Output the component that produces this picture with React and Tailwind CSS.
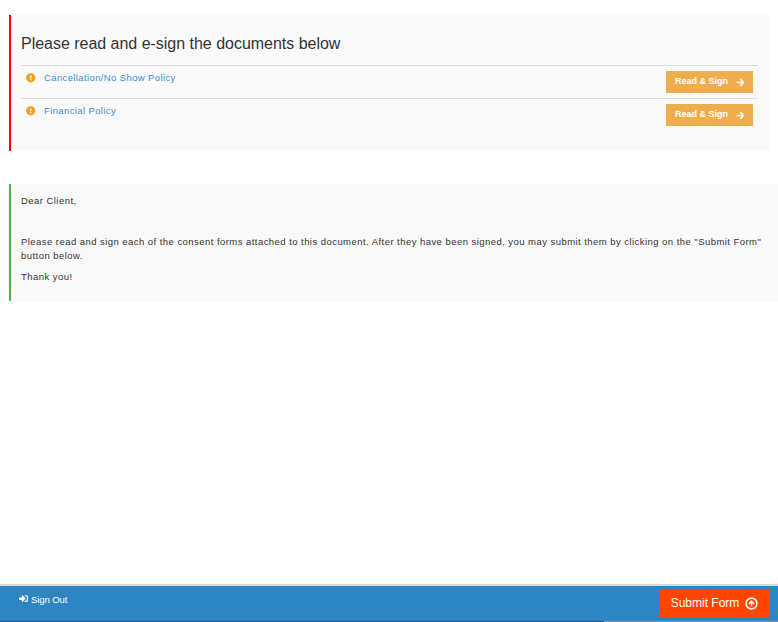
import React from 'react';
import { FaExclamationCircle, FaArrowRight, FaSignInAlt } from 'react-icons/fa';
import { CircleArrowUp } from 'lucide-react';

const docs = ['Cancellation/No Show Policy', 'Financial Policy'];

const DocRow = ({ name }) => (
  <div className="flex justify-between h-[33px] border-t border-[#dcdcdc]">
    <div className="flex items-start pt-[5px] pl-[5px]">
      <FaExclamationCircle className="mt-[2px] text-[9.5px] text-[#f59e1f]" />
      <a href="#" className="ml-[8.5px] text-[#428bca] text-[9.5px] leading-[14px] tracking-[0.38px]">
        {name}
      </a>
    </div>
    <button className="flex items-center self-start mt-[5px] mr-[5px] w-[87px] h-[22px] pl-[9px] bg-[#f0ad4e] text-white text-[9px] font-bold">
      Read &amp; Sign
      <FaArrowRight className="ml-[8px] text-[9px]" />
    </button>
  </div>
);

const App = () => {
  return (
    <div className="flex flex-col h-[622px] bg-white font-['Liberation_Sans',Arial,sans-serif] overflow-hidden">
      <main className="flex-1 pt-[15px] pl-[9px]">
        <section className="mr-[8px] h-[136px] border-l-2 border-[#ff0000] bg-[#fafafa] pl-[10px] pr-[12px]">
          <h1 className="pt-[19px] h-[50px] text-[16px] leading-[20px] tracking-[-0.02px] text-[#333333]">
            Please read and e-sign the documents below
          </h1>
          {docs.map((name) => (
            <DocRow key={name} name={name} />
          ))}
        </section>

        <section className="mt-[33px] h-[117px] border-l-2 border-[#4caf50] bg-[#f9f9f9] pl-[10px] pt-[10px] text-[9.5px] leading-[14px] tracking-[0.45px] text-[#333333]">
          <p>Dear Client,</p>
          <p className="mt-[27px] pr-[10px]">
            Please read and sign each of the consent forms attached to this document. After they have been signed, you may submit them by clicking on the "Submit Form" button below.
          </p>
          <p className="mt-[7px]">Thank you!</p>
        </section>
      </main>

      <footer className="flex justify-between h-[37px] border-t-2 border-[#d8d8d8] bg-[#2d86c1] text-white">
        <a href="#" className="flex items-start pt-[7px] pl-[19px] text-[9.5px] leading-[14px] tracking-[-0.1px]">
          <FaSignInAlt className="mt-[1px] mr-[3px] text-[9px]" />
          Sign Out
        </a>
        <button className="flex items-center justify-center self-start mt-[3px] mr-[8px] w-[111px] h-[28px] bg-[#ff4500] text-[12px]">
          Submit Form
          <CircleArrowUp size={13} strokeWidth={3} className="ml-[6px]" />
        </button>
      </footer>
      <div className="flex h-[1px]">
        <div className="w-[604px] bg-[#1f4f8f]" />
        <div className="flex-1 bg-[#8a9aa5]" />
      </div>
    </div>
  );
};

export default App;
